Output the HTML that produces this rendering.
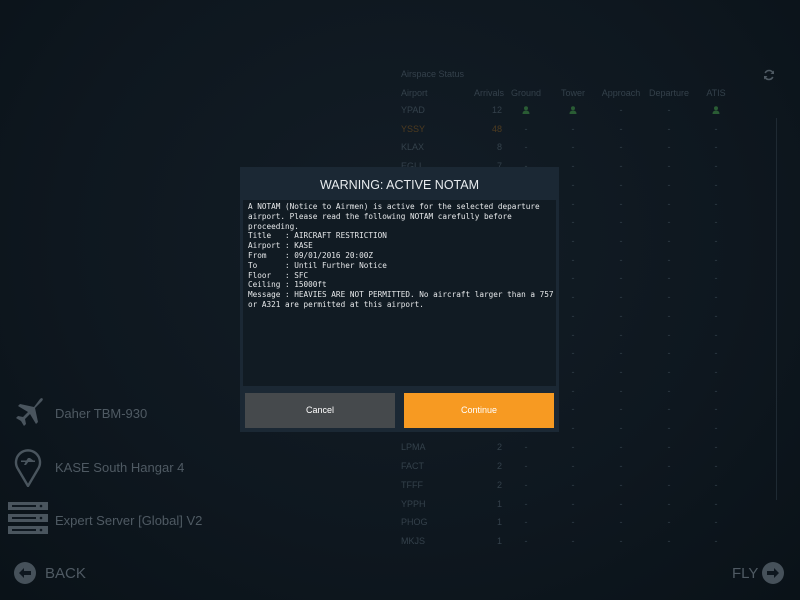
<!DOCTYPE html>
<html><head><style>
body{margin:0;width:800px;height:600px;overflow:hidden;background:radial-gradient(ellipse at 50% 40%,#131d26 0%,#0e171f 60%,#0a1218 100%);font-family:"Liberation Sans",sans-serif;position:relative}
.t{position:absolute;color:#34414b;font-size:9px}
.c{position:absolute;color:#34414b;font-size:9px;width:30px;text-align:center}
.lbl{position:absolute;color:#4f5a63;font-size:13px}
#modal{position:absolute;left:240px;top:167px;width:319px;height:265px;background:#1b2834}
#hdr{position:absolute;left:0;top:0;width:319px;height:33px;color:#e8ecef;font-size:12.5px;text-align:center;line-height:36px}
#body{position:absolute;left:3px;top:33px;width:313px;height:186px;background:#111b23;color:#e6e8ea;font-family:"DejaVu Sans Mono","Liberation Mono",monospace;font-size:7.7px;line-height:9.8px;padding:2px 4px 2px 5px;box-sizing:border-box;white-space:pre;overflow:hidden}
.btn{position:absolute;top:226px;width:150px;height:35px;color:#fff;font-size:9px;text-align:center;line-height:35px}
</style></head><body>
<div class="t" style="left:401px;top:69px">Airspace Status</div>
<svg style="position:absolute;left:763px;top:69px" width="12" height="12" viewBox="0 0 12 12"><path d="M10 4A4.3 4.3 0 0 0 2.2 4M2 8a4.3 4.3 0 0 0 7.8 0" stroke="#4f5a63" stroke-width="1.6" fill="none"/><path d="M11 1.5V5H7.5zM1 10.5V7h3.5z" fill="#4f5a63"/></svg>
<div style="position:absolute;left:776px;top:118px;width:1px;height:382px;background:#1f2a33"></div>
<div class="t" style="left:401px;top:88px">Airport</div>
<div class="t" style="left:474px;top:88px">Arrivals</div>
<div class="c" style="left:511px;top:88px;width:30px">Ground</div>
<div class="c" style="left:558px;top:88px">Tower</div>
<div class="c" style="left:600px;top:88px;width:42px">Approach</div>
<div class="c" style="left:646px;top:88px;width:46px">Departure</div>
<div class="c" style="left:701px;top:88px">ATIS</div>
<div id="rows"></div>
<script>
var r=[["YPAD",12,105],["YSSY",48,124],["KLAX",8,142],["EGLL",7,161],["LPMA",2,442],["FACT",2,461],["TFFF",2,480],["YPPH",1,499],["PHOG",1,517],["MKJS",1,536]];
var h="",cx=[526,573,621,669,716];
r.forEach(function(a,i){var col=a[0]=="YSSY"?"#4f3c20":"#34414b";
h+='<div class="t" style="left:401px;top:'+a[2]+'px;color:'+col+'">'+a[0]+'</div><div class="t" style="left:472px;width:30px;text-align:right;top:'+a[2]+'px;color:'+col+'">'+a[1]+'</div>';
cx.forEach(function(x,j){if(i==0&&(j==0||j==1||j==4))h+='<svg style="position:absolute;left:'+(x-4)+'px;top:'+(a[2]+1)+'px" width="8" height="8"><circle cx="4" cy="2.3" r="2" fill="#2a5c34"/><path d="M0.5 8Q0.5 4.5 4 4.5Q7.5 4.5 7.5 8z" fill="#2a5c34"/></svg>';else h+='<div class="c" style="left:'+(x-15)+'px;top:'+a[2]+'px">-</div>';});});
for(var y=180;y<435;y+=18.7){cx.forEach(function(x){h+='<div class="c" style="left:'+(x-15)+'px;top:'+Math.round(y)+'px">-</div>';});}
document.getElementById('rows').innerHTML=h;
</script>
<svg style="position:absolute;left:10px;top:395px" width="36" height="36" viewBox="0 0 36 36"><path d="M30 4c2-2 4 0 2 2l-7 7 3 14-2 2-6-10-5 5 1 5-2 2-3-5-5-3 2-2 5 1 5-5-10-6 2-2 14 3z" fill="#4a555e"/></svg>
<div class="lbl" style="left:55px;top:406px">Daher TBM-930</div>
<svg style="position:absolute;left:14px;top:447px" width="28" height="40" viewBox="0 0 28 40"><path d="M14 39L4 22A12 12 0 1 1 24 22z" fill="none" stroke="#4a555e" stroke-width="2.4"/><path d="M8 14h12l-4-3h-2l-2 3zM12 14l-2 4h2l3-4z" fill="#4a555e"/><path d="M7 13.5h14v1.5H7z" fill="#4a555e"/></svg>
<div class="lbl" style="left:55px;top:460px">KASE South Hangar 4</div>
<svg style="position:absolute;left:8px;top:502px" width="40" height="32" viewBox="0 0 40 32"><g fill="#4a555e"><rect y="0" width="40" height="8"/><rect y="12" width="40" height="8"/><rect y="24" width="40" height="8"/></g><g fill="#0e171f"><rect x="4" y="3" width="24" height="2"/><rect x="4" y="15" width="24" height="2"/><rect x="4" y="27" width="24" height="2"/><circle cx="33" cy="4" r="1.3"/><circle cx="33" cy="16" r="1.3"/><circle cx="33" cy="28" r="1.3"/></g></svg>
<div class="lbl" style="left:55px;top:513px">Expert Server [Global] V2</div>
<svg style="position:absolute;left:14px;top:562px" width="22" height="22" viewBox="0 0 22 22"><circle cx="11" cy="11" r="11" fill="#46515a"/><path d="M5 11l5-5v3h7v4h-7v3z" fill="#0e171f"/></svg>
<div class="lbl" style="left:45px;top:565px;font-size:15px">BACK</div>
<div class="lbl" style="left:732px;top:565px;font-size:15px">FLY</div>
<svg style="position:absolute;left:762px;top:562px" width="22" height="22" viewBox="0 0 22 22"><circle cx="11" cy="11" r="11" fill="#46515a"/><path d="M17 11l-5-5v3H5v4h7v3z" fill="#0e171f"/></svg>
<div id="modal">
<div id="hdr">WARNING: ACTIVE NOTAM</div>
<div id="body">A NOTAM (Notice to Airmen) is active for the selected departure
airport. Please read the following NOTAM carefully before
proceeding.
Title   : AIRCRAFT RESTRICTION
Airport : KASE
From    : 09/01/2016 20:00Z
To      : Until Further Notice
Floor   : SFC
Ceiling : 15000ft
Message : HEAVIES ARE NOT PERMITTED. No aircraft larger than a 757
or A321 are permitted at this airport.</div>
<div class="btn" style="left:5px;background:#45494c">Cancel</div>
<div class="btn" style="left:164px;background:#f79a22">Continue</div>
</div>
</body></html>
